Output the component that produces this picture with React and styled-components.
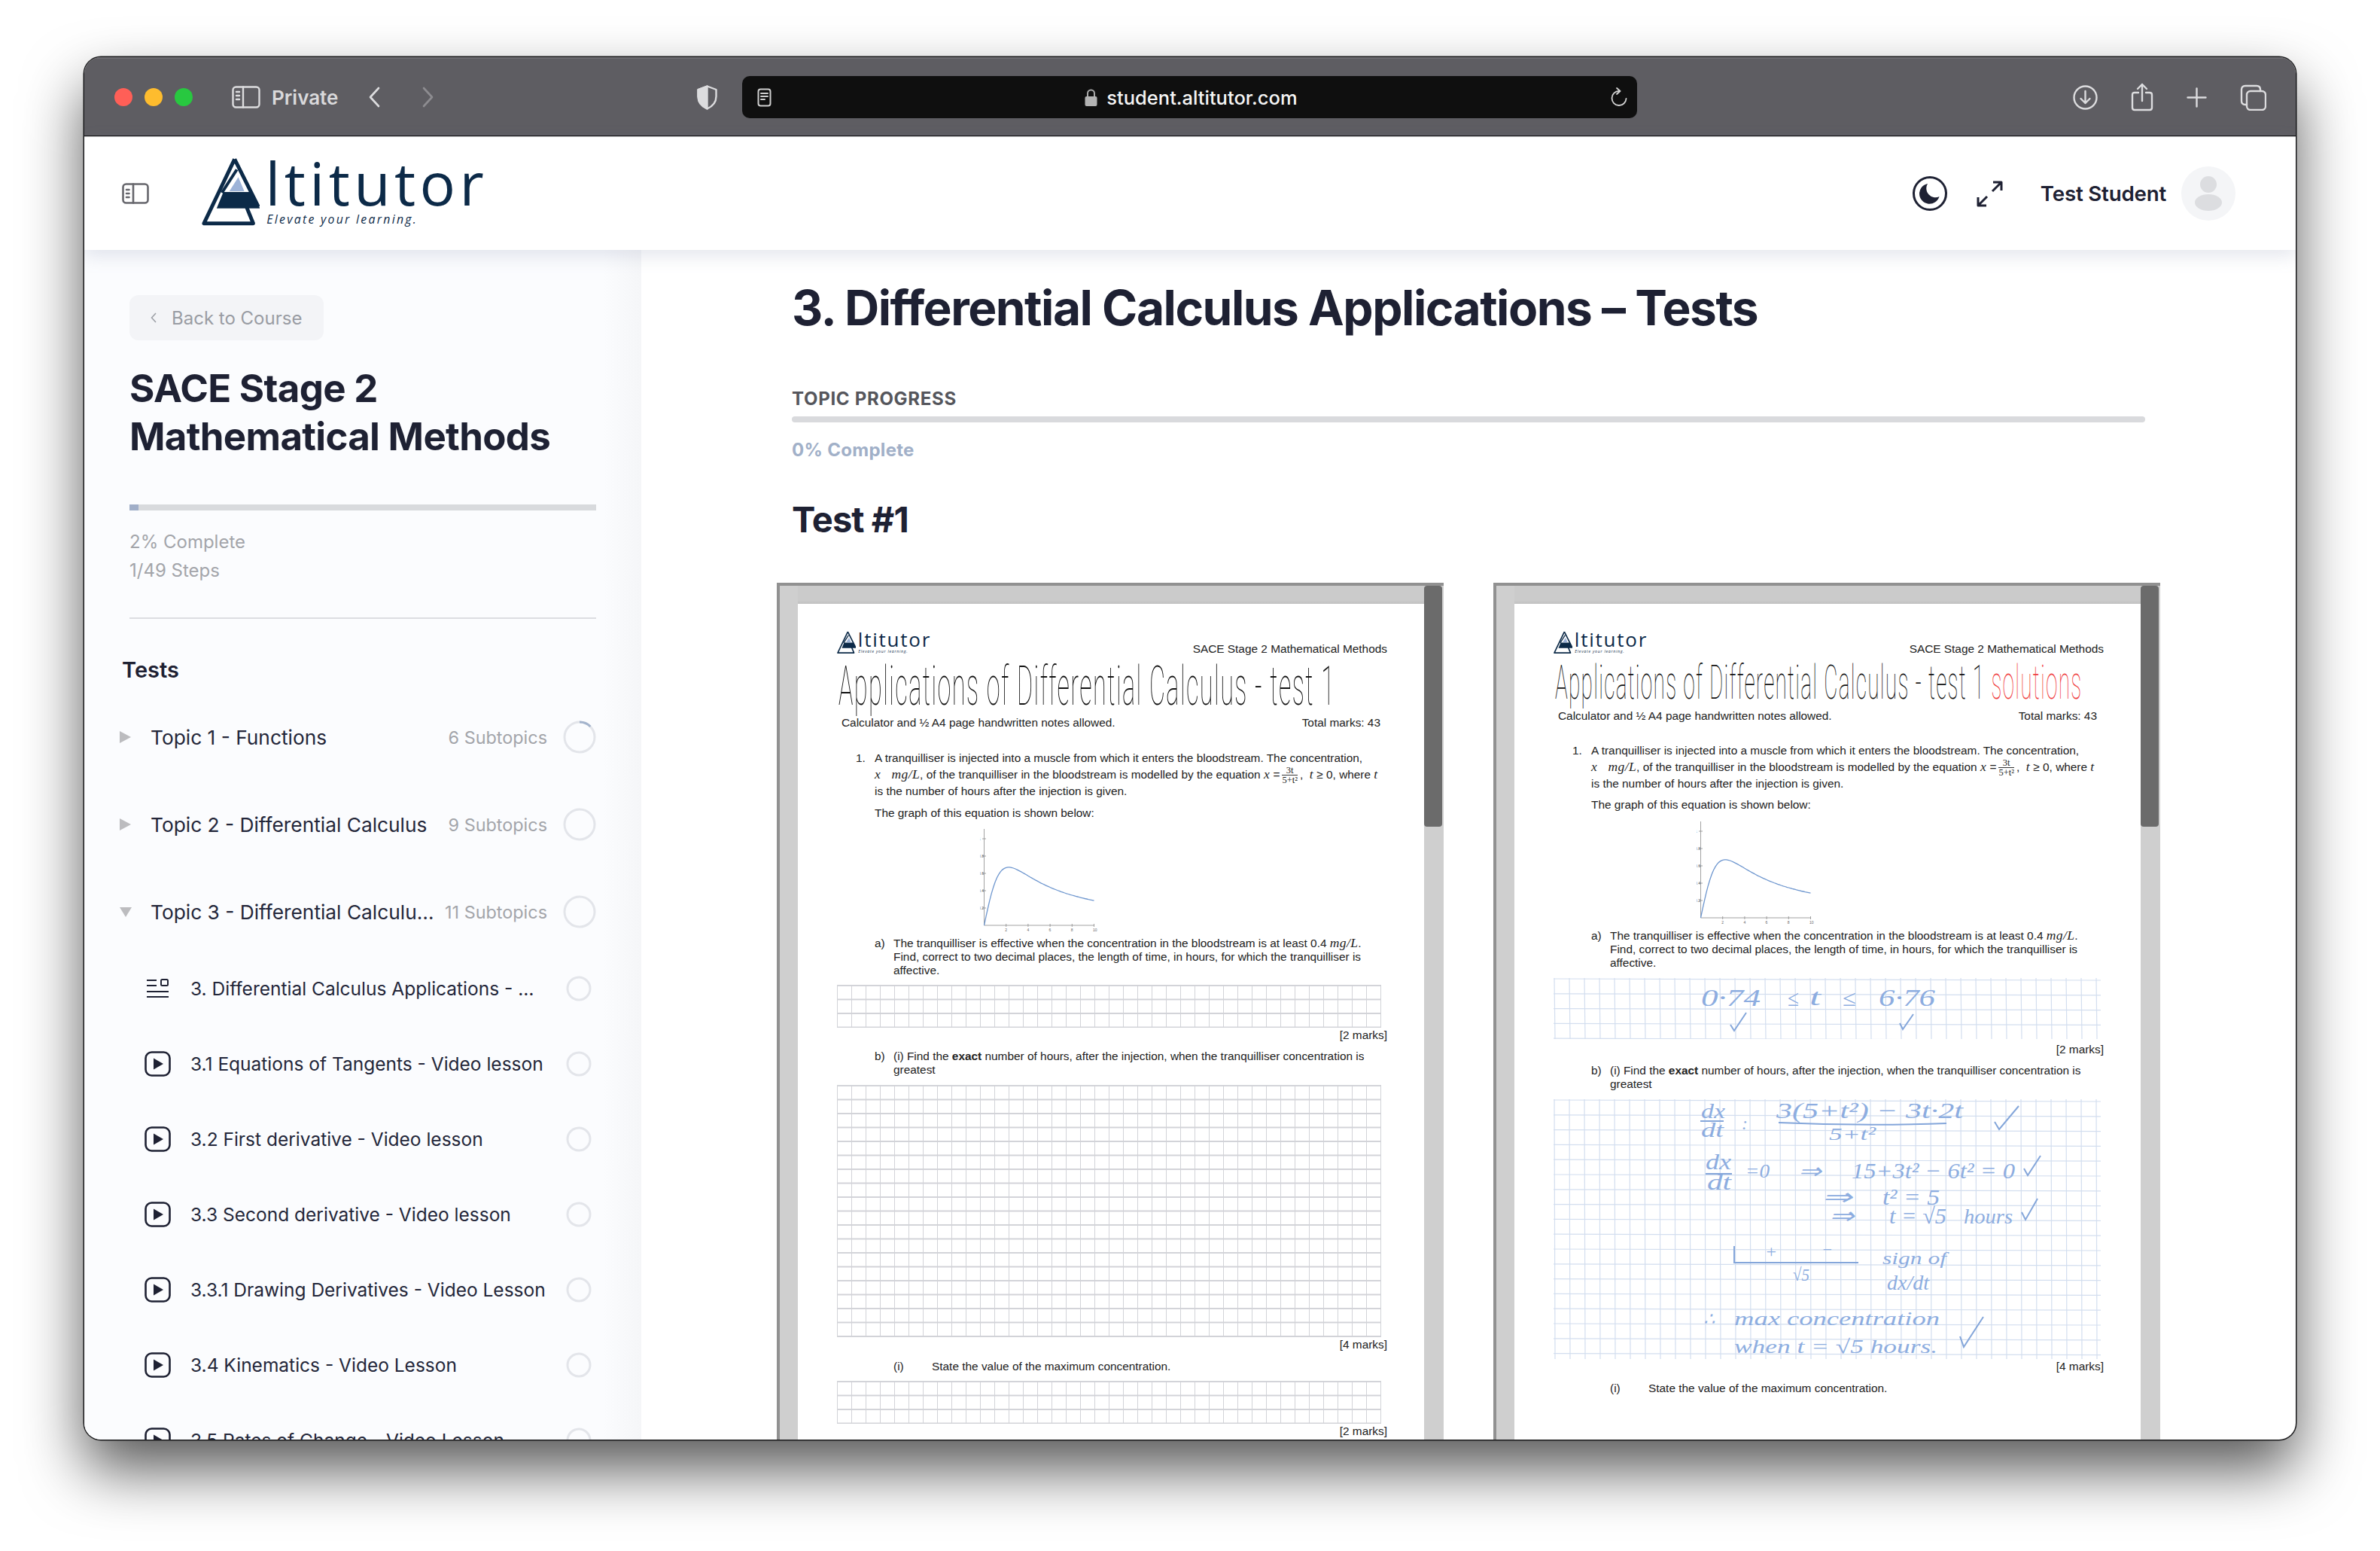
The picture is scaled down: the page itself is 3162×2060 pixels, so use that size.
import * as React from "react";
import styled, { createGlobalStyle } from "styled-components";

const GlobalStyle = createGlobalStyle`
  html, body {
    margin: 0;
    background: #fff;
  }
  body {
    width: 3162px;
    height: 2060px;
    overflow: hidden;
    font-family: "Inter", "Liberation Sans", sans-serif;
    color: #1e2133;
  }
  * {
    box-sizing: border-box;
  }
`;

const Page = styled.div`
  padding: 76px 0 0 112px;
`;

const Window = styled.div`
  width: 2938px;
  height: 1836px;
  display: flex;
  flex-direction: column;
  overflow: hidden;
  border-radius: 22px;
  background: #fff;
  box-shadow: 0 0 0 1.5px #1b1b1d, 0 40px 80px rgba(0, 0, 0, 0.66);
`;

/* browser chrome */
const Toolbar = styled.div`
  height: 105px;
  flex: none;
  display: flex;
  align-items: center;
  padding: 0 39px 0 40px;
  background: #5e5d62;
  border-top: 2px solid #6d6c71;
  border-bottom: 1px solid #0c0c0c;
`;

const Lights = styled.div`
  display: flex;
  gap: 16px;
  margin-right: 52px;
`;

const Light = styled.span`
  width: 24px;
  height: 24px;
  border-radius: 50%;
  background: ${(p) => p.$color};
`;

const ChromeIcon = styled.svg`
  flex: none;
  display: block;
  margin-left: ${(p) => p.$ml || 0}px;
  fill: none;
  stroke: ${(p) => p.$stroke || "#dcdcde"};
  stroke-width: 2.4;
  stroke-linecap: round;
  stroke-linejoin: round;
`;

const PrivateLabel = styled.span`
  margin-left: 15px;
  font-size: 26px;
  font-weight: 600;
  color: #d9d9db;
`;

const UrlBar = styled.div`
  width: 1189px;
  height: 56px;
  margin-left: 33px;
  padding: 0 12px 0 20px;
  display: flex;
  align-items: center;
  border-radius: 10px;
  background: #0f0f0f;
`;

const UrlCenter = styled.div`
  flex: 1;
  display: flex;
  justify-content: center;
  align-items: center;
  gap: 12px;
`;

const UrlText = styled.span`
  font-size: 25.5px;
  font-weight: 500;
  color: #f4f4f4;
`;

const ToolbarRight = styled.div`
  margin-left: auto;
  display: flex;
  align-items: center;
  gap: 44px;
`;

/* app header */
const Header = styled.header`
  height: 151px;
  flex: none;
  position: relative;
  z-index: 2;
  display: flex;
  align-items: center;
  padding: 0 80px 0 50px;
  background: #fff;
  border-top: 1.5px solid #c8c8ca;
  box-shadow: 0 8px 22px rgba(120, 130, 165, 0.2);
`;

const LogoBox = styled.div`
  display: flex;
  flex: none;
  font-size: ${(p) => p.$size}px;
  font-family: "Open Sans", "Liberation Sans", sans-serif;
  color: #0c2a48;
`;

const LogoMark = styled.svg`
  display: block;
  width: 0.98em;
  height: 1.165em;
  flex: none;
`;

const LogoText = styled.div`
  margin-left: 0.09em;
`;

const LogoWord = styled.div`
  margin-top: -0.065em;
  font-size: 1em;
  font-weight: 500;
  line-height: 1em;
  letter-spacing: 0.068em;
  white-space: nowrap;
`;

const LogoTag = styled.div`
  margin: 0.08em 0 0 0.11em;
  font-size: 0.2em;
  line-height: 1em;
  font-style: italic;
  letter-spacing: 0.145em;
  white-space: nowrap;
`;

const HeaderLogo = styled.div`
  margin: -5px 0 0 70px;
`;

const HeaderRight = styled.div`
  margin-left: auto;
  display: flex;
  align-items: center;
`;

const UserName = styled.span`
  margin: 0 20px 0 50px;
  font-size: 27.7px;
  font-weight: 600;
  letter-spacing: -0.2px;
`;

const Avatar = styled.div`
  width: 72px;
  height: 72px;
  border-radius: 50%;
  background: #f4f5f7;
  display: flex;
  align-items: center;
  justify-content: center;
`;

/* page body */
const Body = styled.div`
  flex: 1;
  min-height: 0;
  display: flex;
`;

const Sidebar = styled.aside`
  width: 740px;
  flex: none;
  overflow: hidden;
  padding: 60px 60px 0 47px;
  background: linear-gradient(to right, #fbfcfe 93%, #f5f6f8);
`;

const SideTop = styled.div`
  padding-left: 13px;
`;

const BackButton = styled.div`
  width: 258px;
  height: 60px;
  display: flex;
  align-items: center;
  padding-left: 28px;
  gap: 20px;
  border-radius: 12px;
  background: #f3f4f7;
  font-size: 24px;
  color: #999ca3;
`;

const CourseTitle = styled.h2`
  margin: 32px 0 0;
  font-size: 51px;
  line-height: 64px;
  font-weight: 700;
  letter-spacing: -0.7px;
`;

const SideBar = styled.div`
  height: 8px;
  margin-top: 58px;
  background: #d8dadd;
`;

const SideFill = styled.div`
  height: 100%;
  background: #a0aec8;
`;

const SideStats = styled.div`
  margin-top: 23px;
  font-size: 24px;
  line-height: 38px;
  color: #a3a5aa;
`;

const SideRule = styled.div`
  height: 2px;
  margin-top: 43px;
  background: #dcdde1;
`;

const SectionName = styled.div`
  margin: 48px 0 11px;
  padding-left: 3px;
  font-size: 29px;
  line-height: 40px;
  font-weight: 600;
`;

const TopicRow = styled.div`
  height: 116px;
  display: flex;
  align-items: center;
`;

const Caret = styled.span`
  flex: none;
  width: 0;
  height: 0;
  margin-right: ${(p) => (p.$open ? 25 : 26)}px;
  border-style: solid;
  border-color: transparent;
  ${(p) =>
    p.$open
      ? "border-width: 13px 8px 0; border-top-color: #bcbcbf; margin-left: 0;"
      : "border-width: 8px 0 8px 15px; border-left-color: #bcbcbf;"}
`;

const TopicName = styled.span`
  flex: 1;
  min-width: 0;
  overflow: hidden;
  text-overflow: ellipsis;
  white-space: nowrap;
  font-size: 26.3px;
  color: #24273a;
`;

const TopicCount = styled.span`
  flex: none;
  margin: 0 21px 0 12px;
  font-size: 23.4px;
  color: #a3a5aa;
`;

const SubList = styled.div`
  margin-top: -6px;
`;

const SubRow = styled.div`
  height: 100px;
  display: flex;
  align-items: center;
  padding: 0 6px 0 33px;
`;

const SubName = styled.span`
  flex: 1;
  min-width: 0;
  margin: 0 ${(p) => p.$mr || 12}px 0 26px;
  overflow: hidden;
  text-overflow: ellipsis;
  white-space: nowrap;
  font-size: 24.5px;
  color: #24273a;
`;

const Ring = styled.svg`
  flex: none;
  display: block;
  fill: none;
`;

/* main column */
const Main = styled.main`
  flex: 1;
  min-width: 0;
  overflow: hidden;
  padding: 37px 200px 0;
`;

const PageTitle = styled.h1`
  margin: 0;
  font-size: 64px;
  line-height: 80px;
  font-weight: 700;
  letter-spacing: -1.5px;
  white-space: nowrap;
`;

const ProgressLabel = styled.div`
  margin-top: 66px;
  font-size: 24px;
  line-height: 30px;
  font-weight: 700;
  letter-spacing: 0.7px;
  color: #55565c;
`;

const ProgressTrack = styled.div`
  height: 8px;
  margin-top: 8px;
  border-radius: 4px;
  background: #d9dadd;
`;

const ProgressText = styled.div`
  margin-top: 22px;
  font-size: 24px;
  line-height: 30px;
  font-weight: 700;
  letter-spacing: 0.3px;
  color: #a1b0c8;
`;

const TestName = styled.h2`
  margin: 47px 0 0;
  font-size: 47px;
  line-height: 60px;
  font-weight: 700;
  letter-spacing: -0.9px;
`;

const Viewers = styled.div`
  margin: 54px -20px 0;
  display: grid;
  grid-template-columns: 886px 886px;
  justify-content: space-between;
`;

/* pdf viewer */
const Viewer = styled.div`
  height: 1200px;
  display: flex;
  padding: 0 2px 0 24px;
  background: #cfcfcf;
  border-top: 4px solid #919191;
  border-left: 4px solid #919191;
`;

const ViewerPage = styled.div`
  width: 832px;
  flex: none;
`;

const ViewerStrip = styled.div`
  height: 24px;
  background: linear-gradient(#cbcbcb 80%, #c0c0c0);
`;

const ScrollTrack = styled.div`
  width: 24px;
  flex: none;
`;

const ScrollThumb = styled.div`
  height: 320px;
  border-radius: 4px;
  background: #6b6b6b;
`;

const Paper = styled.div`
  height: 1170px;
  padding: 36px 49px 0 52px;
  background: #fff;
  font-family: "Liberation Sans", Arial, sans-serif;
  font-size: 15.4px;
  line-height: 18px;
  color: #222;
`;

const PaperHead = styled.div`
  height: 34px;
  display: flex;
  justify-content: space-between;
`;

const PaperCourse = styled.div`
  align-self: flex-end;
  line-height: 20px;
`;

const PaperTitle = styled.div`
  height: ${(p) => p.$h}px;
  margin-left: 2px;
  font-family: "Roboto", "Liberation Sans", sans-serif;
  font-weight: 100;
  font-size: ${(p) => p.$size}px;
  line-height: ${(p) => p.$h}px;
  letter-spacing: ${(p) => p.$ls}px;
  color: #111;
  white-space: nowrap;
  transform: scaleX(${(p) => p.$sx});
  transform-origin: left center;
`;

const Red = styled.span`
  color: #f0403f;
`;

const NotesRow = styled.div`
  display: flex;
  justify-content: space-between;
  margin: 0 9px 0 6px;
`;

const Question = styled.div`
  display: flex;
  margin-top: ${(p) => p.$mt || 0}px;
  padding-left: ${(p) => p.$indent}px;
  line-height: ${(p) => p.$lh || 18}px;
  white-space: nowrap;
`;

const QLabel = styled.span`
  width: ${(p) => p.$w}px;
  flex: none;
`;

const Maths = styled.span`
  font-family: "Liberation Serif", serif;
  font-style: italic;
  font-size: 17.5px;
  line-height: 0;
  letter-spacing: 0.4px;
`;

const Fraction = styled.span`
  display: inline-flex;
  flex-direction: column;
  align-items: center;
  vertical-align: middle;
  margin: -8px 3px;
  font-family: "Liberation Serif", serif;
  font-size: 12.5px;
  line-height: 12px;
`;

const FracTop = styled.span`
  padding: 0 2px;
  border-bottom: 1px solid #333;
  width: 100%;
  text-align: center;
`;

const Plot = styled.svg`
  display: block;
  margin: ${(p) => p.$mt}px 0 0 190px;
`;

const AnswerGrid = styled.div`
  height: ${(p) => p.$rows * 18.5 + 1.5}px;
  margin: ${(p) => p.$mt}px 8px 0 0;
  background-color: #fff;
  background-image: linear-gradient(to right, #d2d3d8 1.5px, transparent 1.5px),
    linear-gradient(to bottom, #d2d3d8 1.5px, transparent 1.5px);
  background-size: 19px 18.5px;
  border-right: 1.5px solid #d2d3d8;
  border-bottom: 1.5px solid #d2d3d8;
`;

const Scan = styled.svg`
  display: block;
  margin-top: ${(p) => p.$mt}px;
`;

const Marks = styled.div`
  margin-top: ${(p) => p.$mt || 0}px;
  text-align: right;
`;

const Hand = styled.text.attrs({ lengthAdjust: "spacingAndGlyphs" })`
  font-family: "Liberation Serif", serif;
  font-style: italic;
  fill: #8dade0;
`;

const TOPICS = [
  { name: "Topic 1 - Functions", count: "6 Subtopics", started: true },
  { name: "Topic 2 - Differential Calculus", count: "9 Subtopics" },
  { name: "Topic 3 - Differential Calculus Applications", count: "11 Subtopics", open: true },
];

const LESSONS = [
  "3.1 Equations of Tangents - Video lesson",
  "3.2 First derivative - Video lesson",
  "3.3 Second derivative - Video lesson",
  "3.3.1 Drawing Derivatives - Video Lesson",
  "3.4 Kinematics - Video Lesson",
  "3.5 Rates of Change - Video Lesson",
];

const Logo = ({ size }) => (
  <LogoBox $size={size}>
    <LogoMark viewBox="0 0 78 92">
      <path
        d="M44 3 L3 89 H69 L60 67 M44 3 L76 67"
        fill="none"
        stroke="#0c2a48"
        strokeWidth="5"
        strokeLinejoin="round"
      />
      <path d="M47 17 L27 48" stroke="#0c2a48" strokeWidth="4" fill="none" />
      <polygon points="20,69 78,69 67,47 29,47" fill="#0c2a48" />
      <polygon points="49,27 37,46 57,46" fill="#9db3d8" />
    </LogoMark>
    <LogoText>
      <LogoWord>ltitutor</LogoWord>
      <LogoTag>Elevate your learning.</LogoTag>
    </LogoText>
  </LogoBox>
);

const ProgressRing = ({ size, started }) => {
  const r = size / 2 - 2;
  return (
    <Ring width={size} height={size} viewBox={`0 0 ${size} ${size}`}>
      <circle cx={size / 2} cy={size / 2} r={r} stroke="#e3e5ea" strokeWidth="3" />
      {started && (
        <path
          d={`M${size / 2} 2 A${r} ${r} 0 0 1 ${size / 2 + r * 0.72} ${size / 2 - r * 0.7}`}
          stroke="#a3b3cc"
          strokeWidth="3"
        />
      )}
    </Ring>
  );
};

const PlayIcon = () => (
  <Ring width="35" height="34" viewBox="0 0 35 34">
    <rect x="1.5" y="1.5" width="32" height="31" rx="8" stroke="#1e2133" strokeWidth="2.6" />
    <path d="M12 9.5 L25 17 L12 24.5 Z" fill="#1e2133" />
  </Ring>
);

const ListIcon = () => (
  <Ring width="35" height="30" viewBox="0 0 35 30" stroke="#1e2133" strokeWidth="2">
    <path d="M3 4 H16 M3 11 H16 M3 19 H32 M3 26 H32" />
    <rect x="22" y="3" width="9" height="8" rx="1.5" />
  </Ring>
);

// x = 3t / (5 + t^2), same curve on both papers
const CURVE = Array.from({ length: 61 }, (_, i) => {
  const t = i / 6;
  const x = 5.5 + t * 14.6;
  const y = 130 - 115 * ((3 * t) / (5 + t * t));
  return `${i ? "L" : "M"}${x.toFixed(1)} ${y.toFixed(1)}`;
}).join(" ");

const Graph = ({ mt }) => (
  <Plot $mt={mt} width="158" height="139" viewBox="0 0 158 139">
    <path d="M5.5 2 V130 H152" fill="none" stroke="#8a8a8a" strokeWidth="0.8" />
    {[0.2, 0.4, 0.6, 0.8, 1].map((v) => (
      <g key={v}>
        <path d={`M3 ${130 - 115 * v} H8`} stroke="#8a8a8a" strokeWidth="0.8" />
        <text x="-2" y={132 - 115 * v} fontSize="5" fill="#666" fontFamily="Liberation Sans">
          {v === 1 ? "1" : v.toFixed(1)}
        </text>
      </g>
    ))}
    {[2, 4, 6, 8, 10].map((v) => (
      <g key={v}>
        <path d={`M${5.5 + v * 14.6} 128 V132`} stroke="#8a8a8a" strokeWidth="0.8" />
        <text x={4 + v * 14.6} y="138" fontSize="5" fill="#666" fontFamily="Liberation Sans">
          {v}
        </text>
      </g>
    ))}
    <path d={CURVE} fill="none" stroke="#6f97cf" strokeWidth="1.3" />
  </Plot>
);

const ScanLines = ({ width, height }) => {
  const cols = Math.ceil(width / 20);
  const rows = Math.ceil(height / 19.8);
  return (
    <g stroke="#d3deef" strokeWidth="1.2">
      {Array.from({ length: cols + 1 }, (_, i) => (
        <path key={`c${i}`} d={`M${i * 20 + 1} 0 L${i * 20 + 2} ${height}`} />
      ))}
      {Array.from({ length: rows + 1 }, (_, i) => (
        <path key={`r${i}`} d={`M0 ${i * 19.8 + 1} L${width} ${i * 19.8 + 3}`} />
      ))}
    </g>
  );
};

const Tick = ({ d }) => <path d={d} fill="none" stroke="#84a6da" strokeWidth="2" />;

const FirstScan = () => (
  <Scan $mt={11} width="727" height="81" viewBox="0 0 727 81">
    <ScanLines width={727} height={81} />
    <Hand x="196" y="37" fontSize="32" textLength="79">0·74</Hand>
    <Hand x="311" y="37" fontSize="30" textLength="15">≤</Hand>
    <Hand x="340" y="36" fontSize="32" textLength="15">t</Hand>
    <Hand x="384" y="37" fontSize="30" textLength="18">≤</Hand>
    <Hand x="432" y="37" fontSize="32" textLength="75">6·76</Hand>
    <Tick d="M235 62 L240 70 L256 46" />
    <Tick d="M460 60 L464 68 L478 48" />
  </Scan>
);

const SecondScan = () => (
  <Scan $mt={11} width="727" height="345" viewBox="0 0 727 345">
    <ScanLines width={727} height={345} />
    <Hand x="196" y="25" fontSize="28" textLength="32">dx</Hand>
    <path d="M195 29 H226 M299 31 Q410 36 522 32" stroke="#84a6da" strokeWidth="2" fill="none" />
    <Hand x="196" y="50" fontSize="28" textLength="30">dt</Hand>
    <Hand x="250" y="40" fontSize="24">:</Hand>
    <Hand x="296" y="25" fontSize="30" textLength="248">3(5+t²) − 3t·2t</Hand>
    <Hand x="366" y="54" fontSize="24" textLength="62">5+t²</Hand>
    <Tick d="M586 30 L592 40 L618 9" />

    <Hand x="202" y="93" fontSize="30" textLength="34">dx</Hand>
    <path d="M202 99 H237" stroke="#84a6da" strokeWidth="2" />
    <Hand x="204" y="120" fontSize="30" textLength="32">dt</Hand>
    <Hand x="255" y="104" fontSize="26" textLength="32">=0</Hand>
    <Hand x="325" y="105" fontSize="28" textLength="30">⇒</Hand>
    <Hand x="396" y="105" fontSize="30" textLength="217">15+3t² − 6t² = 0</Hand>
    <Tick d="M625 92 L630 101 L647 75" />

    <Hand x="356" y="140" fontSize="30" textLength="40">⇒</Hand>
    <Hand x="437" y="140" fontSize="30" textLength="76">t² = 5</Hand>
    <Hand x="366" y="165" fontSize="30" textLength="33">⇒</Hand>
    <Hand x="446" y="165" fontSize="30" textLength="76">t = √5</Hand>
    <Hand x="545" y="165" fontSize="28" textLength="65">hours</Hand>
    <Tick d="M622 150 L627 160 L643 132" />

    <path d="M240 195 V217 H405" stroke="#84a6da" strokeWidth="2" fill="none" />
    <Hand x="281" y="210" fontSize="24">+</Hand>
    <Hand x="356" y="207" fontSize="22">−</Hand>
    <Hand x="318" y="241" fontSize="24" textLength="22">√5</Hand>
    <Hand x="437" y="219" fontSize="24" textLength="85">sign of</Hand>
    <Hand x="443" y="253" fontSize="28" textLength="56">dx/dt</Hand>

    <Hand x="199" y="300" fontSize="24">∴</Hand>
    <Hand x="240" y="300" fontSize="26" textLength="273">max concentration</Hand>
    <Tick d="M540 315 L545 329 L571 289" />
    <Hand x="240" y="337" fontSize="26" textLength="270">when  t = √5  hours.</Hand>
  </Scan>
);

const TestPaper = ({ solutions }) => (
  <ViewerPage>
    <ViewerStrip />
    <Paper>
      <PaperHead>
        <Logo size={26} />
        <PaperCourse>SACE Stage 2 Mathematical Methods</PaperCourse>
      </PaperHead>
      {solutions ? (
        <PaperTitle $h={70} $size={63} $sx={0.445} $ls={2.8}>
          Applications of Differential Calculus - test 1 <Red>solutions</Red>
        </PaperTitle>
      ) : (
        <PaperTitle $h={79} $size={72} $sx={0.45} $ls={3.2}>
          Applications of Differential Calculus - test 1
        </PaperTitle>
      )}
      <NotesRow>
        <span>Calculator and ½ A4 page handwritten notes allowed.</span>
        <span>Total marks: 43</span>
      </NotesRow>
      <Question $mt={solutions ? 26 : 27} $indent={25} $lh={22}>
        <QLabel $w={25}>1.</QLabel>
        <span>
          A tranquilliser is injected into a muscle from which it enters the bloodstream. The concentration,
          <br />
          <Maths>x&nbsp;&nbsp; mg/L</Maths>, of the tranquilliser in the bloodstream is modelled by the equation{" "}
          <Maths>x</Maths> =
          <Fraction>
            <FracTop>3t</FracTop>
            <span>5+t²</span>
          </Fraction>
          , &nbsp;<Maths>t</Maths> ≥ 0, where <Maths>t</Maths>
          <br />
          is the number of hours after the injection is given.
        </span>
      </Question>
      <Question $mt={solutions ? 8 : 9} $indent={50}>
        The graph of this equation is shown below:
      </Question>
      <Graph mt={solutions ? 11 : 10} />
      <Question $mt={6} $indent={50}>
        <QLabel $w={25}>a)</QLabel>
        <span>
          The tranquilliser is effective when the concentration in the bloodstream is at least 0.4{" "}
          <Maths>mg/L</Maths>.
          <br />
          Find, correct to two decimal places, the length of time, in hours, for which the tranquilliser is
          <br />
          affective.
        </span>
      </Question>
      {solutions ? <FirstScan /> : <AnswerGrid $rows={3} $mt={10} />}
      <Marks $mt={solutions ? 5 : 1}>[2 marks]</Marks>
      <Question $mt={10} $indent={50}>
        <QLabel $w={25}>b)</QLabel>
        <span>
          (i) Find the <b>exact</b> number of hours, after the injection, when the tranquilliser concentration is
          <br />
          greatest
        </span>
      </Question>
      {solutions ? <SecondScan /> : <AnswerGrid $rows={18} $mt={11} />}
      <Marks $mt={1}>[4 marks]</Marks>
      <Question $mt={11} $indent={75}>
        <QLabel $w={51}>(i)</QLabel>
        <span>State the value of the maximum concentration.</span>
      </Question>
      {!solutions && <AnswerGrid $rows={3} $mt={10} />}
      {!solutions && <Marks $mt={1}>[2 marks]</Marks>}
    </Paper>
  </ViewerPage>
);

const App = () => {
  return (
    <Page>
      <GlobalStyle />
      <Window>
        <Toolbar>
          <Lights>
            <Light $color="#ff5f57" />
            <Light $color="#febc2e" />
            <Light $color="#28c840" />
          </Lights>
          <ChromeIcon width="38" height="30" viewBox="0 0 38 30">
            <rect x="1.5" y="1.5" width="35" height="27" rx="4" />
            <path d="M15 1.5 V28.5 M6 8 H10 M6 13 H10 M6 18 H10" />
          </ChromeIcon>
          <PrivateLabel>Private</PrivateLabel>
          <ChromeIcon $ml={40} width="16" height="28" viewBox="0 0 16 28">
            <path d="M14 2 L3 14 L14 26" strokeWidth="2.6" />
          </ChromeIcon>
          <ChromeIcon $ml={56} $stroke="#8d8c90" width="16" height="28" viewBox="0 0 16 28">
            <path d="M2 2 L13 14 L2 26" strokeWidth="2.6" />
          </ChromeIcon>
          <ChromeIcon $ml={349} width="27" height="33" viewBox="0 0 27 33">
            <path d="M13.5 1.5 L25.5 6 V15 Q25.5 26 13.5 31.5 Q1.5 26 1.5 15 V6 Z" />
            <path d="M13.5 1.5 L1.5 6 V15 Q1.5 26 13.5 31.5 Z" fill="#dcdcde" />
          </ChromeIcon>
          <UrlBar>
            <ChromeIcon width="19" height="25" viewBox="0 0 19 25" $stroke="#cfcfcf">
              <rect x="1.5" y="1.5" width="16" height="22" rx="3" strokeWidth="2" />
              <path d="M5 7 H14 M5 11 H14 M5 15 H10" strokeWidth="2" />
            </ChromeIcon>
            <UrlCenter>
              <svg width="17" height="23" viewBox="0 0 17 23">
                <path d="M4 10 V6 A4.5 4.5 0 0 1 13 6 V10" fill="none" stroke="#a8a8a8" strokeWidth="2" />
                <rect x="0.5" y="10" width="16" height="13" rx="2" fill="#b3b3b3" />
              </svg>
              <UrlText>student.altitutor.com</UrlText>
            </UrlCenter>
            <ChromeIcon width="24" height="26" viewBox="0 0 24 26" $stroke="#d2d2d2">
              <path d="M12 5 A9.5 9.5 0 1 0 21.5 15" strokeWidth="1.8" />
              <path d="M9 1 L13.5 5 L9 9" strokeWidth="1.8" />
            </ChromeIcon>
          </UrlBar>
          <ToolbarRight>
            <ChromeIcon width="33" height="33" viewBox="0 0 33 33">
              <circle cx="16.5" cy="16.5" r="15" />
              <path d="M16.5 8 V24 M10.5 18 L16.5 24 L22.5 18" />
            </ChromeIcon>
            <ChromeIcon width="30" height="38" viewBox="0 0 30 38">
              <path d="M10 13 H5 Q2 13 2 16 V33 Q2 36 5 36 H25 Q28 36 28 33 V16 Q28 13 25 13 H20" />
              <path d="M15 24 V2 M9 8 L15 2 L21 8" />
            </ChromeIcon>
            <ChromeIcon width="27" height="27" viewBox="0 0 27 27">
              <path d="M13.5 1.5 V25.5 M1.5 13.5 H25.5" />
            </ChromeIcon>
            <ChromeIcon width="35" height="35" viewBox="0 0 35 35">
              <rect x="9" y="9" width="25" height="25" rx="5" />
              <path d="M9 27 H7 Q2 27 2 22 V7 Q2 2 7 2 H22 Q27 2 27 7 V9" />
            </ChromeIcon>
          </ToolbarRight>
        </Toolbar>

        <Header>
          <ChromeIcon $stroke="#66666c" width="36" height="28" viewBox="0 0 36 28">
            <rect x="1.5" y="1.5" width="33" height="25" rx="4" strokeWidth="2.6" />
            <path d="M15 1.5 V26.5 M6 9 H9.5 M6 14 H9.5 M6 19 H9.5" strokeWidth="2.6" />
          </ChromeIcon>
          <HeaderLogo>
            <Logo size={79} />
          </HeaderLogo>
          <HeaderRight>
            <svg width="48" height="48" viewBox="0 0 48 48">
              <circle cx="24" cy="24" r="21.5" fill="none" stroke="#1e2133" strokeWidth="3" />
              <path d="M21 11 A13.5 13.5 0 1 0 36.5 28 A12 12 0 0 1 21 11 Z" fill="#1e2133" />
            </svg>
            <ChromeIcon $ml={38} $stroke="#1e2133" width="35" height="35" viewBox="0 0 35 35">
              <path d="M21 14 L33 2 M22 2 H33 V13 M14 21 L2 33 M2 22 V33 H13" strokeWidth="3" strokeLinecap="butt" />
            </ChromeIcon>
            <UserName>Test Student</UserName>
            <Avatar>
              <svg width="36" height="46" viewBox="0 0 36 46">
                <ellipse cx="18" cy="11" rx="11" ry="11" fill="#dcdde0" />
                <ellipse cx="18" cy="35" rx="18" ry="11" fill="#dcdde0" />
              </svg>
            </Avatar>
          </HeaderRight>
        </Header>

        <Body>
          <Sidebar>
            <SideTop>
              <BackButton>
                <svg width="8" height="14" viewBox="0 0 8 14">
                  <path d="M7 1 L1.5 7 L7 13" fill="none" stroke="#9a9da4" strokeWidth="1.5" />
                </svg>
                Back to Course
              </BackButton>
              <CourseTitle>
                SACE Stage 2
                <br />
                Mathematical Methods
              </CourseTitle>
              <SideBar>
                <SideFill style={{ width: "2%" }} />
              </SideBar>
              <SideStats>
                2% Complete
                <br />
                1/49 Steps
              </SideStats>
              <SideRule />
            </SideTop>
            <SectionName>Tests</SectionName>
            {TOPICS.map((topic) => (
              <TopicRow key={topic.name}>
                <Caret $open={topic.open} />
                <TopicName>{topic.name}</TopicName>
                <TopicCount>{topic.count}</TopicCount>
                <ProgressRing size={44} started={topic.started} />
              </TopicRow>
            ))}
            <SubList>
              <SubRow>
                <ListIcon />
                <SubName $mr={37}>3. Differential Calculus Applications - Tests</SubName>
                <ProgressRing size={34} />
              </SubRow>
              {LESSONS.map((lesson) => (
                <SubRow key={lesson}>
                  <PlayIcon />
                  <SubName>{lesson}</SubName>
                  <ProgressRing size={34} />
                </SubRow>
              ))}
            </SubList>
          </Sidebar>

          <Main>
            <PageTitle>3. Differential Calculus Applications – Tests</PageTitle>
            <ProgressLabel>TOPIC PROGRESS</ProgressLabel>
            <ProgressTrack />
            <ProgressText>0% Complete</ProgressText>
            <TestName>Test #1</TestName>
            <Viewers>
              <Viewer>
                <TestPaper />
                <ScrollTrack>
                  <ScrollThumb />
                </ScrollTrack>
              </Viewer>
              <Viewer>
                <TestPaper solutions />
                <ScrollTrack>
                  <ScrollThumb />
                </ScrollTrack>
              </Viewer>
            </Viewers>
          </Main>
        </Body>
      </Window>
    </Page>
  );
};

export default App;
